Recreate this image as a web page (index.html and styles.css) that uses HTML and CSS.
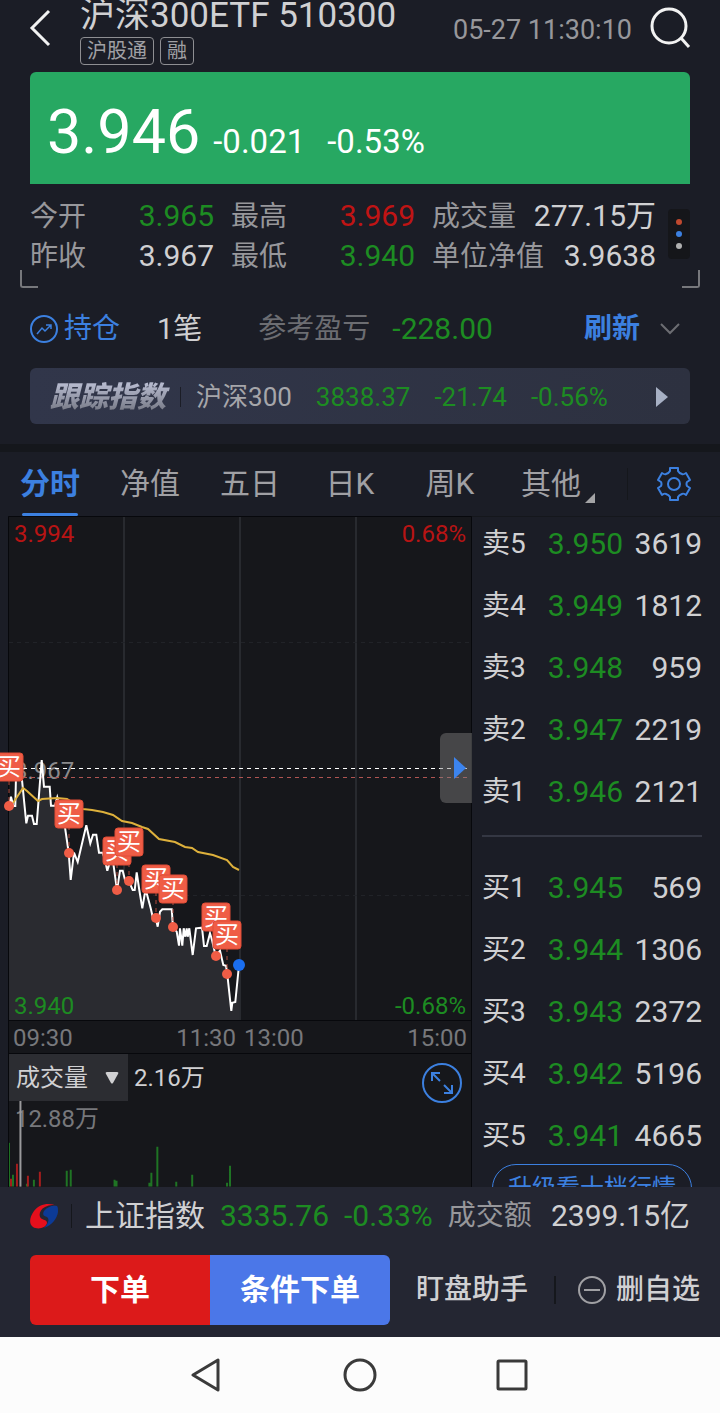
FILE: index.html
```html
<!DOCTYPE html>
<html lang="zh-CN">
<head>
    <meta charset="UTF-8">
    <meta name="viewport" content="width=device-width, initial-scale=1.0">
    <title>沪深300ETF 510300</title>
    <link rel="stylesheet" href="styles.css">
</head>
<body>
    <main class="content">
        <header class="header">
            <button class="icon-btn back" aria-label="返回">
                <svg width="24" height="40" viewBox="0 0 24 40"><path d="M21 3 L4 20 L21 37" fill="none" stroke="#f2f2f2" stroke-width="3"/></svg>
            </button>
            <div class="title-box">
                <h1>沪深300ETF 510300</h1>
                <div class="tags"><span>沪股通</span><span>融</span></div>
            </div>
            <time class="time">05-27 11:30:10</time>
            <button class="icon-btn" aria-label="搜索">
                <svg width="42" height="42" viewBox="0 0 42 42" fill="none" stroke="#f2f2f2" stroke-width="3"><circle cx="19" cy="19" r="17"/><path d="M31 31 L39 40"/></svg>
            </button>
        </header>

        <section class="price-card">
            <span class="price">3.946</span>
            <span class="change">-0.021</span>
            <span class="change">-0.53%</span>
        </section>

        <section class="stats">
            <dl class="stats-grid">
                <div><dt>今开</dt><dd class="down">3.965</dd></div>
                <div><dt>最高</dt><dd class="up">3.969</dd></div>
                <div><dt>成交量</dt><dd>277.15万</dd></div>
                <div><dt>昨收</dt><dd>3.967</dd></div>
                <div><dt>最低</dt><dd class="down">3.940</dd></div>
                <div><dt>单位净值</dt><dd>3.9638</dd></div>
            </dl>
            <button class="dots" aria-label="更多"><i class="dot-red"></i><i class="dot-blue"></i><i class="dot-grey"></i></button>
        </section>
        <div class="corners"><i class="corner-left"></i><i class="corner-right"></i></div>

        <section class="position">
            <a href="#" class="hold">
                <svg width="28" height="28" viewBox="0 0 28 28" fill="none" stroke="#3c80e0" stroke-width="2"><circle cx="14" cy="14" r="13"/><path d="M7 19 L12 13 L15 16 L21 10 M16 10 H21 V14" stroke-width="1.500"/></svg>
                持仓
            </a>
            <span class="count">1笔</span>
            <span class="ref">参考盈亏</span>
            <span class="profit down">-228.00</span>
            <button class="refresh">刷新</button>
            <button class="icon-btn" aria-label="展开">
                <svg width="20" height="12" viewBox="0 0 20 12"><path d="M1 1 L10 10 L19 1" fill="none" stroke="#6c6d72" stroke-width="2"/></svg>
            </button>
        </section>

        <a href="#" class="track">
            <strong>跟踪指数</strong>
            <span class="track-name">沪深300</span>
            <span class="down">3838.37</span>
            <span class="down">-21.74</span>
            <span class="down">-0.56%</span>
            <svg width="14" height="20" viewBox="0 0 14 20"><path d="M0 0 L12 10 L0 20 Z" fill="#a7b0c4"/></svg>
        </a>

        <nav class="tabs">
            <button class="active">分时</button>
            <button>净值</button>
            <button>五日</button>
            <button>日K</button>
            <button>周K</button>
            <button class="more">其他<svg width="10" height="10" viewBox="0 0 10 10"><path d="M10 0 V10 H0 Z" fill="#a4a4a6"/></svg></button>
            <button class="settings" aria-label="设置">
                <svg width="34" height="34" viewBox="0 0 34 34" fill="none" stroke="#3c80e0" stroke-width="2" stroke-linejoin="round"><path d="M13 1 H21 V4 Q22 6 25 7 Q26 8 29 6 L33 13 L30 15 Q29 17 30 19 L33 21 L29 28 Q26 26 25 27 Q22 28 21 30 V33 H13 V30 Q12 28 9 27 Q8 26 5 28 L1 21 L4 19 Q5 17 4 15 L1 13 L5 6 Q8 8 9 7 Q12 6 13 4 Z"/><circle cx="17" cy="17" r="6"/></svg>
            </button>
        </nav>

        <section class="quote">
            <div class="chart">
                <div class="price-chart">
                    <svg viewBox="0 0 472 505">
                        <rect x="8" y="0" width="464" height="505" fill="#16171b"/>
                        <path d="M124 1 V504 M240 1 V504 M356 1 V504" stroke="#282a2f" stroke-width="2"/>
                        <path d="M9 126.5 H470 M9 379.5 H470" stroke="#212328" stroke-dasharray="4 4"/>
                        <path d="M9 290 11 280.7 13.3 290 15.3 290 16 260 19 258 22 264 26.3 307.3 28 299.7 32 299.7 34 308 36.7 308 41.7 244 44 270.7 49.7 270.7 51 289.7 55 289.7 57.3 281.3 60 290.7 63.3 295.7 65 311.3 68.7 336.7 70.7 364 74 336.7 77.7 346 86.3 309.3 90.3 327.3 93 318.7 96.3 318.7 99 336.7 102.7 336.7 105 344 107.3 354.7 110 345.7 113.3 347.3 117 374 120 354.7 122.7 354.7 125 364 128.7 364.7 132.7 374 134.7 374 136.7 356.3 139.3 374 142.3 392.3 144.7 378 146.7 377.3 150.7 392.3 153 402.3 155.7 402.3 157.7 410.7 160 395.7 162.3 393.3 171.7 393.3 173 411.3 176.7 415.7 179 429.7 180 412.3 182.3 429.7 183.7 412.3 185.3 420.7 186.7 412.3 187.7 420.7 189.3 412.3 192.7 439 196 412.3 202 411.7 204 430 206.7 430 210 417.3 212 424 215.7 440 220 434.7 223.3 449 226 449.7 227.3 458.3 231.3 495 232.3 486.7 235.3 486 239 449 V504 H9 Z" fill="#2a2b30"/>
                        <path d="M8.5 505 V.5 H471.5 V505 M8 504.5 H472" fill="none" stroke="#07080c"/>
                        <g class="axis-text">
                            <text x="14" y="26" fill="#b81414">3.994</text>
                            <text x="466" y="26" fill="#b81414" text-anchor="end">0.68%</text>
                            <text x="14" y="263" fill="#8a8a8c">3.967</text>
                            <text x="14" y="498" fill="#1d8c22">3.940</text>
                            <text x="466" y="498" fill="#1d8c22" text-anchor="end">-0.68%</text>
                        </g>
                        <path d="M23 252.5 H470" stroke="#ffffff" stroke-dasharray="4 4"/>
                        <path d="M23 261.5 H470" stroke="#b05552" stroke-dasharray="4 4"/>
                        <path d="M9 290 11 280.7 13.3 290 15.3 290 16 260 19 258 22 264 26.3 307.3 28 299.7 32 299.7 34 308 36.7 308 41.7 244 44 270.7 49.7 270.7 51 289.7 55 289.7 57.3 281.3 60 290.7 63.3 295.7 65 311.3 68.7 336.7 70.7 364 74 336.7 77.7 346 86.3 309.3 90.3 327.3 93 318.7 96.3 318.7 99 336.7 102.7 336.7 105 344 107.3 354.7 110 345.7 113.3 347.3 117 374 120 354.7 122.7 354.7 125 364 128.7 364.7 132.7 374 134.7 374 136.7 356.3 139.3 374 142.3 392.3 144.7 378 146.7 377.3 150.7 392.3 153 402.3 155.7 402.3 157.7 410.7 160 395.7 162.3 393.3 171.7 393.3 173 411.3 176.7 415.7 179 429.7 180 412.3 182.3 429.7 183.7 412.3 185.3 420.7 186.7 412.3 187.7 420.7 189.3 412.3 192.7 439 196 412.3 202 411.7 204 430 206.7 430 210 417.3 212 424 215.7 440 220 434.7 223.3 449 226 449.7 227.3 458.3 231.3 495 232.3 486.7 235.3 486 239 449" fill="none" stroke="#ffffff" stroke-width="2"/>
                        <path d="M13 287 17 281 23 272 27 275 38 285 42 283 57 282 67 283 83 293 92 294 103 296 113 299 122 305 132 307 142 311 148 313 159 323 175 326 185 331 192 332 198 336 213 339 227 344 233 351 239 354" fill="none" stroke="#deb13c" stroke-width="2"/>
                        <path d="M9 265 V290 M69 310 V337 M117 348 V374 M129 339 V365 M156 376 V402 M173 385 V411 M216 412 V440 M227 432 V458" stroke="#b04c3e" stroke-dasharray="4 4"/>
                        <g fill="#ef5d46">
                            <circle cx="9" cy="290" r="5"/><circle cx="69" cy="337" r="5"/><circle cx="117" cy="374" r="5"/><circle cx="129" cy="365" r="5"/>
                            <circle cx="156" cy="402" r="5"/><circle cx="173" cy="411" r="5"/><circle cx="216" cy="440" r="5"/><circle cx="227" cy="458" r="5"/>
                        </g>
                        <circle cx="239" cy="449" r="6" fill="#1a6ef0"/>
                        <g class="buy-mark">
                            <rect x="-5" y="237" width="28" height="28" rx="3"/><text x="9" y="259">买</text>
                            <rect x="55" y="284" width="28" height="28" rx="3"/><text x="69" y="306">买</text>
                            <rect x="103" y="321" width="28" height="28" rx="3"/><text x="117" y="343">买</text>
                            <rect x="115" y="312" width="28" height="28" rx="3"/><text x="129" y="334">买</text>
                            <rect x="142" y="349" width="28" height="28" rx="3"/><text x="156" y="371">买</text>
                            <rect x="159" y="359" width="28" height="28" rx="3"/><text x="173" y="381">买</text>
                            <rect x="202" y="387" width="28" height="28" rx="3"/><text x="216" y="409">买</text>
                            <rect x="213" y="405" width="28" height="28" rx="3"/><text x="227" y="427">买</text>
                        </g>
                    </svg>
                    <button class="side-toggle" aria-label="收起盘口">
                        <svg width="12" height="22" viewBox="0 0 12 22"><path d="M0 0 L12 11 L0 22 Z" fill="#3c84ee"/></svg>
                    </button>
                </div>
                <div class="hours">
                    <div><span>09:30</span><span>11:30</span></div>
                    <div><span>13:00</span><span>15:00</span></div>
                </div>
                <div class="volume">
                    <div class="volume-head">
                        <div class="select-box">
                            <select aria-label="指标"><option>成交量</option></select>
                            <svg width="14" height="12" viewBox="0 0 14 12"><path d="M2 0 H12 Q14 0 13 2 L8 11 Q7 12 6 11 L1 2 Q0 0 2 0 Z" fill="#d0d0d2"/></svg>
                        </div>
                        <span>2.16万</span>
                    </div>
                    <svg viewBox="0 0 464 86">
                        <text x="6" y="26" class="volume-max">12.88万</text>
                        <g stroke="#1f7424" stroke-width="2">
                            <path d="M.5 42V86" stroke-width="1"/>
                            <path d="M4 74V86M18 83V86M25 79V86M58 70V86M62 69V86M106 79V86M108 80V86M141 82V86M143 72V86M149 46V86M168 81V86M184 74V86M219 82V86M222 65V86"/>
                        </g>
                        <path d="M2 78V86M8 63V86M19 75V86M31 71V86" stroke="#a51d1d" stroke-width="2"/>
                        <path d="M11.500 0V86" stroke="#9a9a9c" stroke-width="2"/>
                    </svg>
                    <button class="expand" aria-label="全屏">
                        <svg width="40" height="40" viewBox="0 0 40 40" fill="none" stroke="#3c80e0" stroke-width="2"><circle cx="20" cy="20" r="19"/><path d="M10 18 V10 H18 M10 10 L18 18 M22 22 L30 30 M22 30 H30 V22"/></svg>
                    </button>
                </div>
            </div>

            <aside class="book">
                <table>
                    <tr><th>卖5</th><td class="down">3.950</td><td>3619</td></tr>
                    <tr><th>卖4</th><td class="down">3.949</td><td>1812</td></tr>
                    <tr><th>卖3</th><td class="down">3.948</td><td>959</td></tr>
                    <tr><th>卖2</th><td class="down">3.947</td><td>2219</td></tr>
                    <tr><th>卖1</th><td class="down">3.946</td><td>2121</td></tr>
                </table>
                <hr>
                <table>
                    <tr><th>买1</th><td class="down">3.945</td><td>569</td></tr>
                    <tr><th>买2</th><td class="down">3.944</td><td>1306</td></tr>
                    <tr><th>买3</th><td class="down">3.943</td><td>2372</td></tr>
                    <tr><th>买4</th><td class="down">3.942</td><td>5196</td></tr>
                    <tr><th>买5</th><td class="down">3.941</td><td>4665</td></tr>
                </table>
                <button class="upgrade">升级看十档行情</button>
            </aside>
        </section>
    </main>

    <footer class="bottom">
        <div class="index-row">
            <svg width="28" height="26" viewBox="0 0 28 26">
                <path d="M27 3 C19 -1 9 1 4 8 C-1 15 -1 21 3 24 C8 27 16 25 17 20 C17 17 14 17 12 16 C8 14 9 7 15 4 C19 2 23 1 27 3 Z" fill="#e60f1c"/>
                <path d="M27 3 C22 2 17 4 14 8 C12 12 14 13 17 14 C20 16 18 21 14 25 C22 22 27 16 28 9 C28 6 28 4 27 3 Z" fill="#0c3a96"/>
            </svg>
            <i class="line"></i>
            <span>上证指数</span>
            <span class="down">3335.76</span>
            <span class="down">-0.33%</span>
            <span class="amount">成交额</span>
            <span>2399.15亿</span>
        </div>
        <div class="actions">
            <button class="order">下单</button>
            <button class="order condition">条件下单</button>
            <button class="plain watch">盯盘助手</button>
            <button class="plain remove">
                <svg width="28" height="28" viewBox="0 0 28 28" fill="none" stroke="#a0a0a4" stroke-width="2"><circle cx="14" cy="14" r="13"/><path d="M6 14 H22"/></svg>
                删自选
            </button>
        </div>
    </footer>

    <nav class="system">
        <button aria-label="后退"><svg width="34" height="34" viewBox="0 0 34 34"><path d="M27 2 V32 L2 17 Z"/></svg></button>
        <button aria-label="主屏"><svg width="34" height="34" viewBox="0 0 34 34"><circle cx="17" cy="17" r="15"/></svg></button>
        <button aria-label="最近任务"><svg width="34" height="34" viewBox="0 0 34 34"><rect x="3" y="3" width="28" height="28" rx="1"/></svg></button>
    </nav>
</body>
</html>
```
FILE: styles.css
```css
* {
    box-sizing: border-box;
}
body {
    margin: 0;
    height: 100vh;
    display: flex;
    flex-direction: column;
    background-color: #1b1d26;
    color: #d0d0d2;
    font-family: Roboto, "Noto Sans CJK SC", sans-serif;
    font-size: 30px;
    line-height: 40px;
    white-space: nowrap;
}
button, select {
    margin: 0;
    padding: 0;
    border: none;
    background: none;
    color: inherit;
    font: inherit;
    cursor: pointer;
}
a {
    color: inherit;
    text-decoration: none;
}
svg {
    display: block;
    flex-shrink: 0;
}
.up {
    color: #c01414;
}
.down {
    color: #1d8c22;
}
.content {
    flex: 1;
    min-height: 0;
    overflow: hidden;
}

/* 顶部 */
.header {
    display: flex;
    padding: 0 28px;
    height: 72px;
}
.icon-btn {
    display: flex;
    align-items: center;
}
.header .icon-btn {
    height: 56px;
}
.title-box {
    margin-left: 28px;
}
h1 {
    margin: 0;
    font-size: 35px;
    font-weight: 400;
    line-height: 32px;
}
.tags {
    display: flex;
    gap: 6px;
    margin-top: 5px;
}
.tags span {
    padding: 0 6px;
    border: 1px solid #8e8e92;
    border-radius: 4px;
    color: #a0a0a4;
    font-size: 20px;
    line-height: 26px;
}
.time {
    margin: 0 18px 0 auto;
    color: #97979b;
    font-size: 27px;
    line-height: 60px;
}

.price-card {
    display: flex;
    align-items: baseline;
    margin: 0 30px;
    padding: 0 17px;
    height: 112px;
    border-radius: 6px 6px 0 0;
    background-color: #27a862;
    color: #ffffff;
    line-height: 120px;
}
.price {
    margin-right: 13px;
    font-size: 61px;
}
.change {
    margin-right: 22px;
    font-size: 33px;
}

.stats {
    display: flex;
    align-items: center;
    justify-content: space-between;
    padding: 12px 30px 0;
}
.stats-grid {
    display: grid;
    grid-template-columns: 184fr 184fr 224fr;
    column-gap: 17px;
    flex: 1;
    margin: 0 12px 0 0;
}
.stats-grid div {
    display: flex;
    align-items: baseline;
    justify-content: space-between;
    height: 40px;
}
dt {
    color: #97979b;
    font-size: 28px;
}
dd {
    margin: 0;
}
.dots {
    display: flex;
    flex-direction: column;
    align-items: center;
    justify-content: center;
    gap: 6px;
    width: 22px;
    height: 50px;
    margin-bottom: 4px;
    border-radius: 4px;
    background-color: #15161a;
}
.dots i {
    width: 6px;
    height: 6px;
    border-radius: 50%;
}
.dot-red {
    background-color: #c0492f;
}
.dot-blue {
    background-color: #3c80e0;
}
.dot-grey {
    background-color: #b0b0b0;
}
.corners {
    display: flex;
    justify-content: space-between;
    padding: 0 20px;
    height: 12px;
    align-items: flex-end;
}
.corners i {
    width: 18px;
    height: 18px;
    border-bottom: 2px solid #77787c;
}
.corner-left {
    border-left: 2px solid #77787c;
    border-bottom-left-radius: 3px;
}
.corner-right {
    border-right: 2px solid #77787c;
    border-bottom-right-radius: 3px;
}

.position {
    display: flex;
    align-items: center;
    padding: 22px 40px 20px 30px;
    height: 80px;
}
.hold {
    display: flex;
    align-items: center;
    gap: 6px;
    color: #3c80e0;
    font-size: 28px;
}
.count {
    margin-left: 37px;
    font-size: 29px;
}
.ref {
    margin-left: 56px;
    color: #6c6d72;
    font-size: 28px;
}
.profit {
    margin-left: 22px;
}
.refresh {
    margin: 0 20px 0 auto;
    color: #3c80e0;
    font-size: 28px;
    font-weight: 700;
}

.track {
    display: flex;
    align-items: center;
    margin: 0 30px 20px;
    padding: 2px 20px 0;
    height: 56px;
    border-radius: 6px;
    background: linear-gradient(90deg, #31364a, #2d3140);
    font-size: 26px;
}
.track strong {
    padding-right: 4px;
    background: linear-gradient(#b4b8cc 20%, #7c7f8c 80%);
    background-clip: text;
    -webkit-background-clip: text;
    color: transparent;
    font-size: 29px;
    font-style: italic;
    font-weight: 900;
}
.track-name {
    margin-left: 10px;
    padding-left: 15px;
    border-left: 1px solid #1b1d26;
    color: #a6a6aa;
    line-height: 20px;
}
.track .down {
    margin-left: 24px;
}
.track svg {
    margin-left: auto;
}

/* 走势切换 */
.tabs {
    display: flex;
    align-items: center;
    height: 72px;
    border-top: 8px solid #15171c;
}
.tabs button {
    flex: 100;
    height: 64px;
    color: #a0a0a4;
}
.tabs .active {
    color: #3c80e0;
    font-weight: 700;
    position: relative;
}
.tabs .active::after {
    content: "";
    position: absolute;
    left: 22px;
    right: 22px;
    bottom: 0;
    height: 3px;
    border-radius: 2px;
    background-color: #3c80e0;
}
.tabs .more {
    display: flex;
    align-items: center;
    justify-content: center;
    gap: 4px;
    margin-left: 8px;
}
.more svg {
    margin-top: 28px;
}
.tabs .settings {
    flex: none;
    display: flex;
    align-items: center;
    justify-content: flex-end;
    margin-left: 19px;
    padding-right: 29px;
    width: 93px;
    height: 32px;
    border-left: 1px solid #15171c;
}

.quote {
    display: grid;
    grid-template-columns: minmax(0, 1fr) 248px;
}
.price-chart {
    position: relative;
}
.axis-text, .volume-max {
    font-size: 24px;
}
.volume-max {
    fill: #77787c;
}
.buy-mark {
    fill: #ef5d46;
    stroke: #e04c36;
    font-size: 24px;
    text-anchor: middle;
}
.buy-mark text {
    fill: #ffffff;
    stroke: none;
}
.side-toggle {
    position: absolute;
    right: 0;
    bottom: 218px;
    display: flex;
    align-items: center;
    justify-content: flex-end;
    padding-right: 6px;
    width: 32px;
    height: 70px;
    border-radius: 6px 0 0 6px;
    background-color: rgba(128, 128, 128, 0.45);
}
.hours {
    display: grid;
    grid-template-columns: 1fr 1fr;
    margin-left: 8px;
    border: 1px solid #07080c;
    border-top: none;
    background-color: #16171b;
    color: #77787c;
    font-size: 24px;
    line-height: 32px;
}
.hours div {
    display: flex;
    justify-content: space-between;
    padding: 1px 4px 0;
    height: 32px;
}
.volume {
    position: relative;
    margin-left: 8px;
    border: 1px solid #07080c;
    border-top: none;
    background-color: #16171b;
}
.volume-head {
    display: flex;
    gap: 6px;
    font-size: 24px;
    line-height: 48px;
    height: 47px;
}
.select-box {
    display: flex;
    align-items: center;
    justify-content: space-between;
    padding: 0 9px 0 7px;
    width: 119px;
    height: 47px;
    background-color: #2c2d32;
}
.select-box select {
    flex: 1;
    appearance: none;
    outline: none;
}
.expand {
    position: absolute;
    top: 9px;
    right: 9px;
}

.book {
    padding: 8px 18px 0 10px;
    border-top: 1px solid #15171c;
}
.book table {
    width: 100%;
    border-collapse: collapse;
}
.book th, .book td {
    padding: 0 0 24px;
    text-align: right;
    font-weight: 400;
    line-height: 38px;
}
.book th {
    text-align: left;
    font-size: 28px;
}
.book td:last-child {
    width: 79px;
}
hr {
    margin: 0 0 32px;
    border: none;
    border-top: 2px solid #343743;
}
.upgrade {
    display: block;
    margin: -15px auto 0;
    width: 200px;
    height: 48px;
    border: 1px solid #3c80e0;
    border-radius: 24px;
    color: #3c80e0;
    font-size: 24px;
}

/* 底部 */
.bottom {
    padding: 9px 30px 12px;
    background-color: #242632;
}
.index-row {
    display: flex;
    align-items: center;
    gap: 15px;
    height: 40px;
    margin-bottom: 19px;
}
.line {
    width: 1px;
    height: 24px;
    margin: 0 -2px;
    background-color: #15171c;
}
.amount {
    color: #97979b;
    font-size: 28px;
}
.index-row span:last-child {
    margin-left: auto;
}
.actions {
    display: flex;
    align-items: center;
    height: 70px;
    margin-right: -10px;
}
.order {
    width: 180px;
    height: 70px;
    border-radius: 6px 0 0 6px;
    background-color: #dc1a1a;
    color: #ffffff;
    font-weight: 700;
}
.condition {
    border-radius: 0 6px 6px 0;
    background-color: #4b77e8;
}
.plain {
    font-size: 28px;
    font-weight: 500;
}
.watch {
    padding: 0 26px;
    border-right: 2px solid #15171c;
    line-height: 28px;
}
.remove {
    display: flex;
    align-items: center;
    gap: 10px;
    margin-left: auto;
}
.system {
    display: flex;
    align-items: center;
    justify-content: center;
    gap: 118px;
    height: 76px;
    background-color: #fcfcfc;
}
.system svg {
    fill: none;
    stroke: #3a3a3a;
    stroke-width: 3;
    stroke-linejoin: round;
}
```
